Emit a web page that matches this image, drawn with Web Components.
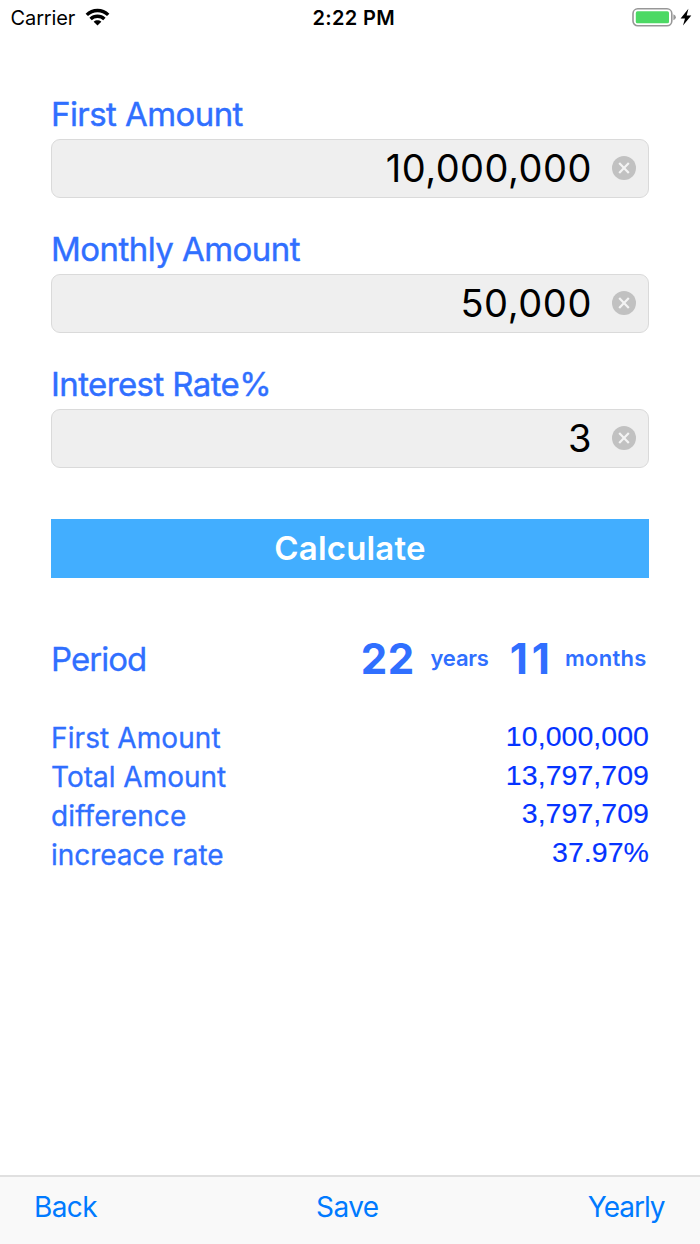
<!DOCTYPE html>
<html lang="en">
<head>
<meta charset="utf-8">
<title>Savings calculator</title>
<style>
html, body { margin: 0; height: 100%; background: #fff; font-family: Inter, "Liberation Sans", sans-serif; }
</style>
</head>
<body>
<savings-app></savings-app>
<script>
const define = (name, html, init) => {
  const template = document.createElement('template');
  template.innerHTML = html;
  customElements.define(name, class extends HTMLElement {
    constructor() {
      super();
      this.attachShadow({ mode: 'open' }).append(template.content.cloneNode(true));
    }
    connectedCallback() { if (init) init(this, this.shadowRoot); }
  });
};

define('status-bar', `
<style>
:host { display: grid; grid-template-columns: 1fr auto 1fr; align-items: center; height: 35px; padding: 0 8px 0 10.6px; box-sizing: border-box; font-size: 20px; color: #000; }
.left { display: flex; align-items: center; letter-spacing: -.15px; }
.left svg { margin: -2px 0 0 9.4px; }
.time { font-weight: 600; letter-spacing: .35px; margin-left: 5px; }
.right { display: flex; justify-content: flex-end; margin-top: -1px; }
</style>
<div class="left"><span>Carrier</span>
<svg width="25" height="18" viewBox="0 0 25 18" fill="none" stroke="#000" stroke-width="3.4"><path d="M1.8 6.9C7.7 1.1 17.3 1.1 23.2 6.9"/><path d="M5.6 11C9.4 7.3 15.6 7.3 19.4 11"/><path d="M12.5 17.4L8.7 13.7C10.8 11.9 14.2 11.9 16.3 13.7Z" fill="#000" stroke="none"/></svg></div>
<span class="time">2:22 PM</span>
<div class="right">
<svg width="60" height="20" viewBox="0 0 60 20"><rect x="1" y="1.8" width="38.8" height="17" rx="4.8" fill="#fff" stroke="#979797" stroke-width="1.6"/><rect x="3.8" y="4.3" width="33.2" height="12" rx="1.6" fill="#4cd964"/><path d="M41.4 7.3q2.5.9 2.5 3t-2.5 3z" fill="#979797"/><path d="M56.4 1.8L48.6 11.4H53L51 18.6L59.3 8.6H54.7Z" fill="#000"/></svg>
</div>`);

define('clear-icon', `
<style>:host { display: block; width: 24px; height: 24px; margin-top: -1px; } svg { display: block; }</style>
<svg width="24" height="24" viewBox="0 0 24 24"><circle cx="12" cy="12" r="12" fill="#c1c1c1"/><path d="M7.2 7L16.8 17M16.8 7L7.2 17" stroke="#f3f3f3" stroke-width="2.2"/></svg>`);

define('amount-field', `
<style>
:host { display: block; }
.label { display: block; height: 40px; line-height: 42px; margin-bottom: 6px; font-size: 33px; color: #306fff; letter-spacing: var(--label-spacing, -.57px); -webkit-text-stroke: .4px; white-space: nowrap; }
.box { display: flex; align-items: center; justify-content: flex-end; gap: 20px; height: 59px; box-sizing: border-box; padding: 0 12px 0 16px; border: 1px solid #dadada; border-radius: 9px; background: #efefef; }
.value { font-size: 38px; line-height: 50px; padding-bottom: 2px; letter-spacing: var(--value-spacing, .5px); color: #000; }
</style>
<span class="label"><slot name="label"></slot></span>
<div class="box"><span class="value"><slot></slot></span><clear-icon></clear-icon></div>`);

define('action-button', `
<style>
:host { display: flex; align-items: center; justify-content: center; height: 59px; padding-bottom: 2px; box-sizing: border-box; background: #42aeff; color: #fff; font-size: 33px; font-weight: 600; letter-spacing: .18px; }
</style><slot></slot>`);

define('period-row', `
<style>
:host { display: flex; align-items: center; height: 60px; color: #306fff; }
.name { flex: 1; font-size: 33px; letter-spacing: -.95px; padding-top: 2px; -webkit-text-stroke: .3px; }
.num { font-size: 42px; font-weight: 700; letter-spacing: .7px; }
.unit { font-size: 22px; font-weight: 600; margin-left: 15.5px; letter-spacing: -.2px; }
.num.m { margin-left: 21px; letter-spacing: 3.8px; }
.unit.m { margin: 0 2.4px 0 11.4px; letter-spacing: .27px; }
</style>
<span class="name">Period</span><span class="num"><slot name="years"></slot></span><span class="unit">years</span><span class="num m"><slot name="months"></slot></span><span class="unit m">months</span>`);

define('result-list', `
<style>
:host { display: flex; justify-content: space-between; color: #306fff; }
.names, .values { display: flex; flex-direction: column; }
.names { font-size: 28px; line-height: 39px; margin-top: 1px; -webkit-text-stroke: .3px; }
.values { align-items: flex-end; margin-top: -1px; font: 28.5px/38.7px "Liberation Sans", Arial, sans-serif; letter-spacing: .05px; color: #0433ff; -webkit-text-stroke: .15px; }
</style>
<div class="names"><slot name="name"></slot></div>
<div class="values"><slot name="value"></slot></div>`);

define('tool-bar', `
<style>
:host { display: grid; grid-template-columns: 1fr auto 1fr; align-items: center; height: 69px; box-sizing: border-box; padding: 0 35px 7px 34px; border-top: 2px solid #e0e0e0; background: #f9f9f9; color: #007aff; font-size: 28px; letter-spacing: -.62px; }
.end { justify-self: end; letter-spacing: -1.01px; margin-right: .4px; }
.mid { margin-right: 4.5px; }
</style>
<span>Back</span><span class="mid">Save</span><span class="end">Yearly</span>`);

define('savings-app', `
<style>
:host { display: flex; flex-direction: column; width: 700px; height: 1244px; overflow: hidden; }
main { flex: 1; display: flex; flex-direction: column; padding: 58px 51px 0; }
.fields { display: grid; gap: 30px; }
action-button { margin-top: 51px; }
period-row { margin-top: 50px; }
result-list { margin-top: 30px; }
</style>
<status-bar></status-bar>
<main>
<div class="fields">
<amount-field><span slot="label">First Amount</span>10,000,000</amount-field>
<amount-field style="--label-spacing:-.55px;--value-spacing:.6px"><span slot="label">Monthly Amount</span>50,000</amount-field>
<amount-field style="--label-spacing:-.6px"><span slot="label">Interest Rate%</span>3</amount-field>
</div>
<action-button>Calculate</action-button>
<period-row><span slot="years">22</span><span slot="months">11</span></period-row>
<result-list>
<span slot="name" style="letter-spacing:.1px">First Amount</span><span slot="name">Total Amount</span><span slot="name" style="letter-spacing:.1px">difference</span><span slot="name" style="letter-spacing:-.06px">increace rate</span>
<span slot="value">10,000,000</span><span slot="value">13,797,709</span><span slot="value">3,797,709</span><span slot="value">37.97%</span>
</result-list>
</main>
<tool-bar></tool-bar>`);
</script>
</body>
</html>
